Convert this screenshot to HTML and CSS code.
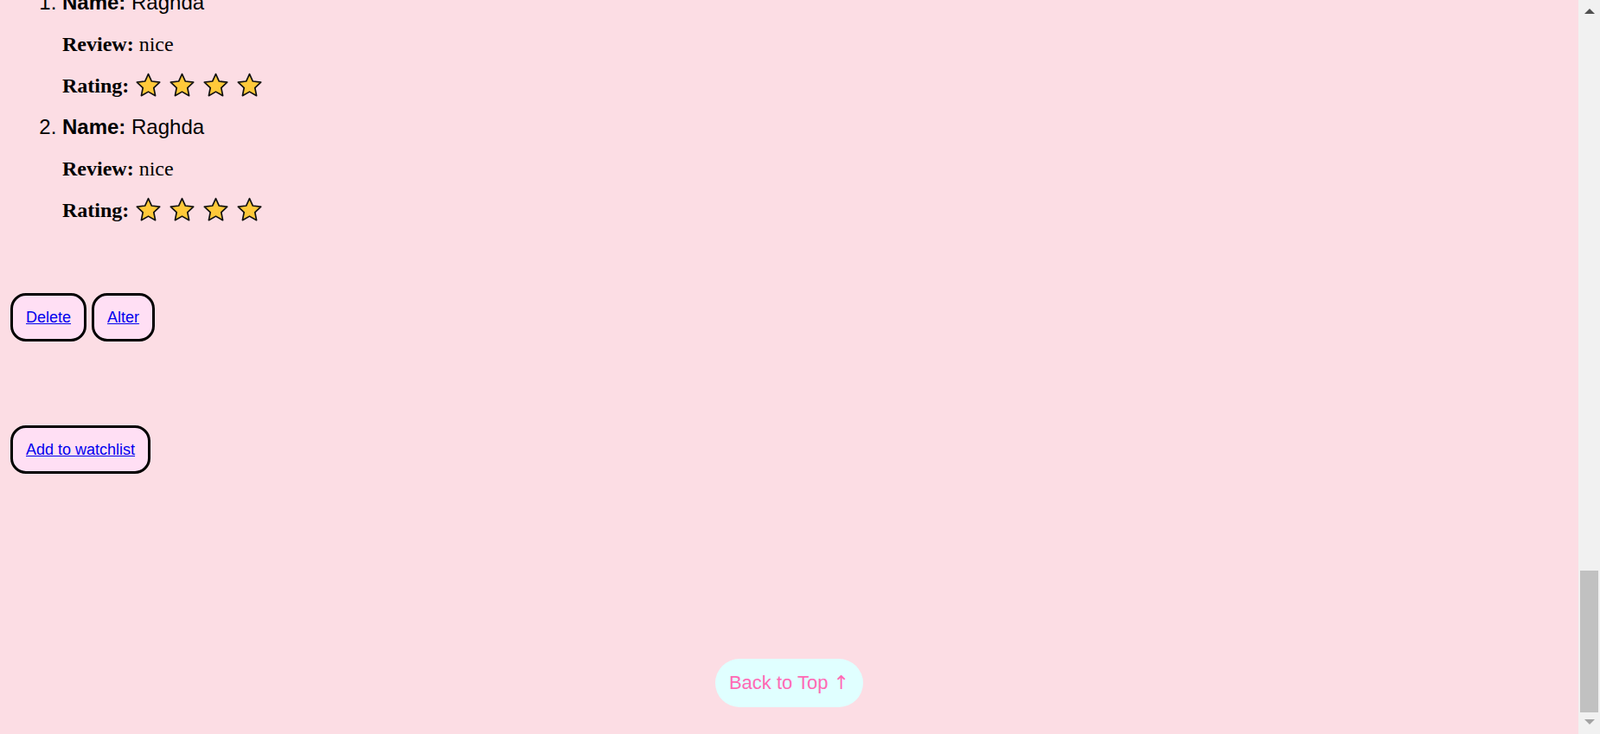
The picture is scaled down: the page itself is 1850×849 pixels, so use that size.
FILE: index.html
```html
<!DOCTYPE html>
<html lang="en">
<head>
<meta charset="utf-8">
<title>Reviews</title>
<link rel="stylesheet" href="styles.css">
</head>
<body>
<main class="page">
  <ol class="reviews">
    <li>
      <strong>Name:</strong> Raghda
      <p class="field"><b>Review:</b> nice</p>
      <p class="field"><b>Rating:</b> <span class="stars"><svg class="star" viewBox="0 0 24 24"><polygon points="12,1.3 15.2,8.3 22.9,9.2 17.2,14.5 18.7,22.1 12,18.3 5.3,22.1 6.8,14.5 1.1,9.2 8.8,8.3"/></svg> <svg class="star" viewBox="0 0 24 24"><polygon points="12,1.3 15.2,8.3 22.9,9.2 17.2,14.5 18.7,22.1 12,18.3 5.3,22.1 6.8,14.5 1.1,9.2 8.8,8.3"/></svg> <svg class="star" viewBox="0 0 24 24"><polygon points="12,1.3 15.2,8.3 22.9,9.2 17.2,14.5 18.7,22.1 12,18.3 5.3,22.1 6.8,14.5 1.1,9.2 8.8,8.3"/></svg> <svg class="star" viewBox="0 0 24 24"><polygon points="12,1.3 15.2,8.3 22.9,9.2 17.2,14.5 18.7,22.1 12,18.3 5.3,22.1 6.8,14.5 1.1,9.2 8.8,8.3"/></svg></span></p>
    </li>
    <li>
      <strong>Name:</strong> Raghda
      <p class="field"><b>Review:</b> nice</p>
      <p class="field"><b>Rating:</b> <span class="stars"><svg class="star" viewBox="0 0 24 24"><polygon points="12,1.3 15.2,8.3 22.9,9.2 17.2,14.5 18.7,22.1 12,18.3 5.3,22.1 6.8,14.5 1.1,9.2 8.8,8.3"/></svg> <svg class="star" viewBox="0 0 24 24"><polygon points="12,1.3 15.2,8.3 22.9,9.2 17.2,14.5 18.7,22.1 12,18.3 5.3,22.1 6.8,14.5 1.1,9.2 8.8,8.3"/></svg> <svg class="star" viewBox="0 0 24 24"><polygon points="12,1.3 15.2,8.3 22.9,9.2 17.2,14.5 18.7,22.1 12,18.3 5.3,22.1 6.8,14.5 1.1,9.2 8.8,8.3"/></svg> <svg class="star" viewBox="0 0 24 24"><polygon points="12,1.3 15.2,8.3 22.9,9.2 17.2,14.5 18.7,22.1 12,18.3 5.3,22.1 6.8,14.5 1.1,9.2 8.8,8.3"/></svg></span></p>
    </li>
  </ol>

  <div class="actions">
    <span class="btn"><a href="#">Delete</a></span>
    <span class="btn"><a href="#">Alter</a></span>
  </div>

  <div class="watch">
    <span class="btn"><a href="#">Add to watchlist</a></span>
  </div>

  <div class="back-wrap">
    <a class="back-top" href="#">Back to Top <span class="arrow">↑</span></a>
  </div>
</main>

<div class="scrollbar" aria-hidden="true">
  <div class="sb-arrow sb-up"><span class="tri-up"></span></div>
  <div class="sb-track"><div class="sb-thumb"></div></div>
  <div class="sb-arrow sb-down"><span class="tri-down"></span></div>
</div>
</body>
</html>
```

FILE: styles.css
```css
html, body {
  margin: 0;
  padding: 0;
  height: 849px;
  overflow: hidden;
}

body {
  display: flex;
  background: #fcdde4;
  font-family: "Liberation Sans", Arial, sans-serif;
}

.page {
  flex: 1;
  min-width: 0;
  height: 849px;
  overflow: hidden;
  padding: 0 12px;
  display: flow-root;
}

.reviews {
  margin: -11px 0 0;
  padding-left: 60px;
  font-size: 24px;
  line-height: 28px;
  color: #000;
}

.reviews strong {
  font-weight: bold;
}

.field {
  margin: 20px 0;
  font-family: "Liberation Serif", "Times New Roman", serif;
  font-size: 24px;
  line-height: 28px;
}

.stars {
  margin-left: 2px;
}

.star {
  width: 29px;
  height: 29px;
  vertical-align: -4px;
  margin: -2px 4px -2px 0;
}

.star polygon {
  fill: #ffc93a;
  stroke: #111;
  stroke-width: 1.4;
  stroke-linejoin: round;
}

.actions {
  margin-top: 82px;
  display: flex;
  gap: 6px;
}

.watch {
  margin-top: 97px;
  display: flex;
}

.btn {
  display: inline-block;
  border: 3px solid #000;
  border-radius: 18px;
  background: #ffdff4;
  padding: 14px 15px;
  font-size: 18px;
  line-height: 22px;
}

.btn a {
  color: #0000ee;
  text-decoration: underline;
}

.back-wrap {
  margin-top: 214px;
  display: flex;
  justify-content: center;
}

.back-top {
  display: inline-block;
  background: #e0ffff;
  color: #ff69b4;
  text-decoration: none;
  font-size: 22px;
  line-height: 26px;
  padding: 15px 16px;
  border-radius: 28px;
}

.arrow {
  font-family: "DejaVu Sans", sans-serif;
}

/* browser-style scrollbar column */
.scrollbar {
  width: 25px;
  flex: none;
  height: 849px;
  background: #f1f1f1;
  display: flex;
  flex-direction: column;
}

.sb-arrow {
  display: flex;
  justify-content: center;
  align-items: flex-start;
}

.sb-up {
  padding-top: 10px;
  height: 15px;
}

.sb-down {
  padding-top: 8px;
  height: 17px;
}

.tri-up {
  width: 0;
  height: 0;
  border-left: 6px solid transparent;
  border-right: 6px solid transparent;
  border-bottom: 6px solid #505050;
}

.tri-down {
  width: 0;
  height: 0;
  border-left: 6px solid transparent;
  border-right: 6px solid transparent;
  border-top: 6px solid #a3a3a3;
}

.sb-track {
  flex: 1;
  display: flex;
  flex-direction: column;
  justify-content: flex-end;
  padding: 0 2px;
}

.sb-thumb {
  height: 164px;
  background: #c1c1c1;
}
```
